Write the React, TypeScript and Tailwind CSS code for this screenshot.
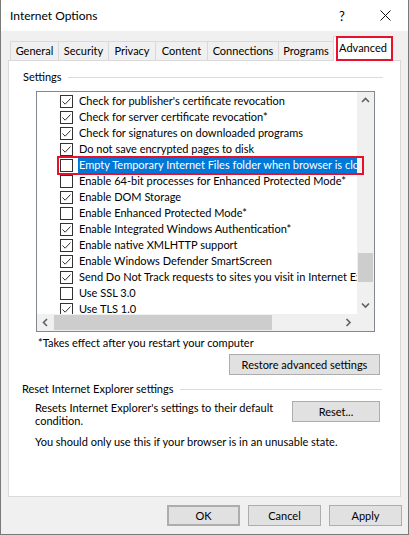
import React from "react";

const items: { label: string; checked: boolean; selected?: boolean }[] = [
  { label: "Check for publisher's certificate revocation", checked: true },
  { label: "Check for server certificate revocation*", checked: true },
  { label: "Check for signatures on downloaded programs", checked: true },
  { label: "Do not save encrypted pages to disk", checked: true },
  { label: "Empty Temporary Internet Files folder when browser is closed", checked: false, selected: true },
  { label: "Enable 64-bit processes for Enhanced Protected Mode*", checked: false },
  { label: "Enable DOM Storage", checked: true },
  { label: "Enable Enhanced Protected Mode*", checked: false },
  { label: "Enable Integrated Windows Authentication*", checked: true },
  { label: "Enable native XMLHTTP support", checked: true },
  { label: "Enable Windows Defender SmartScreen", checked: true },
  { label: "Send Do Not Track requests to sites you visit in Internet Explorer", checked: true },
  { label: "Use SSL 3.0", checked: false },
  { label: "Use TLS 1.0", checked: true },
];

const tabs = [
  { label: "General", w: "w-[48px]" },
  { label: "Security", w: "w-[50px]" },
  { label: "Privacy", w: "w-[47px]" },
  { label: "Content", w: "w-[52px]" },
  { label: "Connections", w: "w-[71px]" },
  { label: "Programs", w: "w-[55px]" },
];

function Checkbox({ checked }: { checked: boolean }) {
  return (
    <div className="w-[13px] h-[13px] border border-[#333333] bg-white shrink-0 flex items-center justify-center">
      {checked && (
        <svg width="11" height="11" viewBox="0 0 11 11">
          <path d="M1.5 5.5 L4.2 8.2 L9.5 2.5" fill="none" stroke="#333333" strokeWidth="1" />
        </svg>
      )}
    </div>
  );
}

function Chevron({ dir }: { dir: "up" | "down" | "left" | "right" }) {
  const d = {
    up: "M1 5 L4.5 1.5 L8 5",
    down: "M1 1.5 L4.5 5 L8 1.5",
    left: "M5 1 L1.5 4.5 L5 8",
    right: "M1.5 1 L5 4.5 L1.5 8",
  }[dir];
  const horiz = dir === "left" || dir === "right";
  return (
    <svg width={horiz ? 7 : 9} height={horiz ? 9 : 7} viewBox={horiz ? "0 0 7 9" : "0 0 9 7"}>
      <path d={d} fill="none" stroke="#606060" strokeWidth="1.6" />
    </svg>
  );
}

function Button({ children, className = "" }: { children: React.ReactNode; className?: string }) {
  return (
    <div
      className={`h-[21px] bg-[#e1e1e1] border border-[#adadad] flex items-center justify-center text-black ${className}`}
    >
      {children}
    </div>
  );
}

export default function App() {
  return (
    <div
      className="w-[409px] h-[535px] flex flex-col bg-[#f0f0f0] border-x border-b border-[#7a7a7a] text-[11px] leading-[16px] text-black overflow-hidden"
      style={{ fontFamily: 'Lato, "Noto Sans", sans-serif' }}
    >
      {/* Title bar */}
      <div className="h-[31px] bg-white flex items-center pl-[9px] shrink-0">
        <span className="text-[12px] flex-1">Internet Options</span>
        <span className="text-[13px] w-[14px] mr-[31px] text-center">?</span>
        <svg width="11" height="11" viewBox="0 0 11 11" className="mr-[17px]">
          <path d="M0.5 0.5 L10.5 10.5 M10.5 0.5 L0.5 10.5" stroke="#111" strokeWidth="1" />
        </svg>
      </div>

      {/* Tabs */}
      <div className="flex items-end h-[29px] pl-[9px] pt-[5px] shrink-0">
        {tabs.map((t) => (
          <div
            key={t.label}
            className={`${t.w} h-[19px] border-t border-l border-[#d9d9d9] flex items-center justify-center whitespace-nowrap`}
          >
            {t.label}
          </div>
        ))}
        <div className="relative w-[60px] h-[25px] -mb-[1px] z-10 bg-white border-t border-x border-[#d9d9d9] flex items-center justify-center pb-[3px]">
          Advanced
          <div className="absolute left-[2px] top-[-1px] w-[57px] h-[25px] border-2 border-[#e8112d]" />
        </div>
      </div>

      {/* Panel */}
      <div className="ml-[7px] w-[393px] h-[437px] bg-white border border-[#d9d9d9] flex flex-col shrink-0">
        <div className="mt-[8px] h-[16px] flex items-center ml-[14px] mr-[17px]">
          <span>Settings</span>
          <div className="flex-1 h-px bg-[#dcdcdc] ml-[6px]" />
        </div>

        {/* List box */}
        <div className="relative mt-[6px] ml-[27px] w-[339px] h-[241px] border border-[#828790] grid grid-cols-[1fr_17px] grid-rows-[1fr_17px]">
          <div className="overflow-hidden pt-[1px]">
            {items.map((it) => (
              <div key={it.label} className="h-[16px] flex items-center pl-[23px] whitespace-nowrap">
                <Checkbox checked={it.checked} />
                <span
                  className={`ml-[5px] px-[1px] ${it.selected ? "bg-[#0078d7] text-white" : ""}`}
                >
                  {it.label}
                </span>
              </div>
            ))}
          </div>
          <div className="bg-[#f0f0f0] flex flex-col">
            <div className="h-[17px] flex items-center justify-center">
              <Chevron dir="up" />
            </div>
            <div className="flex-1 flex flex-col">
              <div className="h-[144px]" />
              <div className="h-[29px] mx-[1px] bg-[#cdcdcd]" />
            </div>
            <div className="h-[17px] flex items-center justify-center">
              <Chevron dir="down" />
            </div>
          </div>
          <div className="bg-[#f0f0f0] flex">
            <div className="w-[17px] flex items-center justify-center">
              <Chevron dir="left" />
            </div>
            <div className="flex-1 flex items-stretch py-[1px]">
              <div className="w-[218px] bg-[#cdcdcd]" />
            </div>
            <div className="w-[17px] flex items-center justify-center">
              <Chevron dir="right" />
            </div>
          </div>
          <div className="bg-[#f0f0f0]" />
          <div className="absolute left-[20px] top-[64px] w-[307px] h-[19px] border-2 border-[#e8112d]" />
        </div>

        <div className="mt-[3px] ml-[29px] h-[16px] flex items-center">*Takes effect after you restart your computer</div>

        <div className="mt-[3px] flex justify-end mr-[20px]">
          <Button className="w-[151px]">Restore advanced settings</Button>
        </div>

        <div className="mt-[6px] h-[16px] flex items-center ml-[13px] mr-[18px]">
          <span>Reset Internet Explorer settings</span>
          <div className="flex-1 h-px bg-[#dcdcdc] ml-[7px]" />
        </div>

        <div className="mt-[4px] ml-[26px] mr-[20px] flex justify-between items-start">
          <div className="leading-[13px] whitespace-nowrap">
            Resets Internet Explorer's settings to their default
            <br />
            condition.
          </div>
          <Button className="w-[88px]">Reset...</Button>
        </div>

        <div className="mt-[7px] ml-[26px] h-[16px] flex items-center">
          You should only use this if your browser is in an unusable state.
        </div>
      </div>

      {/* Dialog buttons */}
      <div className="mt-[8px] flex justify-end gap-[8px] mr-[6px]">
        <Button className="w-[73px] border-[#0078d7] border-2">OK</Button>
        <Button className="w-[73px]">Cancel</Button>
        <Button className="w-[73px]">Apply</Button>
      </div>
    </div>
  );
}
